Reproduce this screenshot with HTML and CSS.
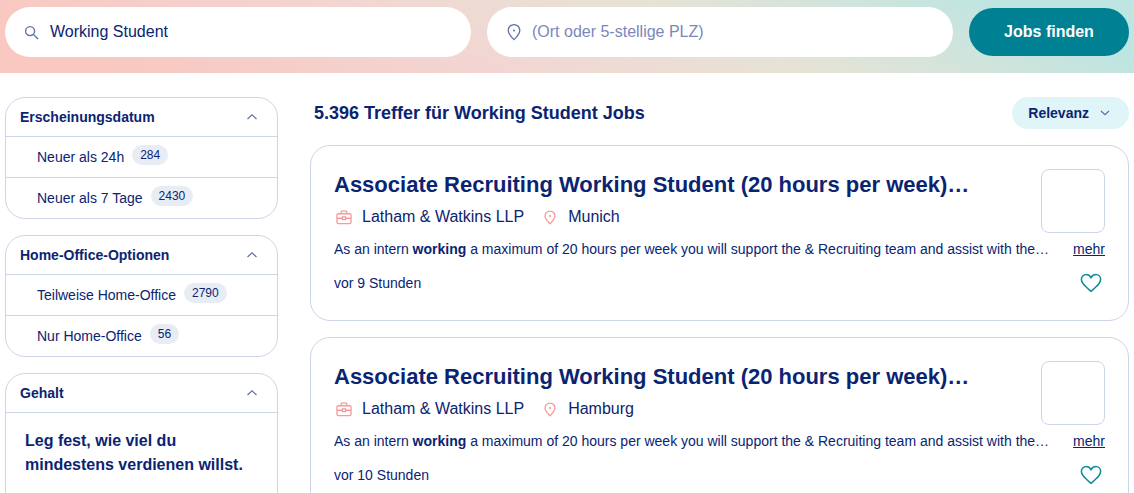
FILE: index.html
```html
<!DOCTYPE html>
<html lang="de">
<head>
  <meta charset="UTF-8">
  <title>Working Student Jobs</title>
  <link rel="stylesheet" href="styles.css">
</head>
<body>
  <header class="search-bar">
    <div class="search-field">
      <svg class="icon-search" width="15" height="15" viewBox="0 0 16 16" fill="none" stroke="#5f6fa8" stroke-width="1.500"><circle cx="6.500" cy="6.500" r="4.800"/><path d="M10 10l5 5"/></svg>
      <span class="field-value">Working Student</span>
    </div>
    <div class="search-field">
      <svg class="icon-place" width="16" height="18" viewBox="0 0 16 18" fill="none" stroke="#5f6fa8" stroke-width="1.300"><path d="M8 16.600C5 13.600 2.200 10.800 2.200 7.400a5.800 5.800 0 0 1 11.600 0c0 3.400-2.800 6.200-5.800 9.200z"/><circle cx="8" cy="7.400" r="1" fill="#5f6fa8" stroke="none"/></svg>
      <span class="field-placeholder">(Ort oder 5-stellige PLZ)</span>
    </div>
    <button class="search-button">Jobs finden</button>
  </header>

  <div class="page">
    <aside class="filters">
      <section class="filter">
        <div class="filter-head">
          <span>Erscheinungsdatum</span>
          <svg class="chevron" width="12" height="8" viewBox="0 0 12 8" fill="none" stroke="#5f6fa8" stroke-width="1.200"><path d="M1.500 6L6 1.800 10.500 6"/></svg>
        </div>
        <div class="filter-row"><span>Neuer als 24h</span><span class="count">284</span></div>
        <div class="filter-row"><span>Neuer als 7 Tage</span><span class="count">2430</span></div>
      </section>
      <section class="filter">
        <div class="filter-head">
          <span>Home-Office-Optionen</span>
          <svg class="chevron" width="12" height="8" viewBox="0 0 12 8" fill="none" stroke="#5f6fa8" stroke-width="1.200"><path d="M1.500 6L6 1.800 10.500 6"/></svg>
        </div>
        <div class="filter-row"><span>Teilweise Home-Office</span><span class="count">2790</span></div>
        <div class="filter-row"><span>Nur Home-Office</span><span class="count">56</span></div>
      </section>
      <section class="filter">
        <div class="filter-head">
          <span>Gehalt</span>
          <svg class="chevron" width="12" height="8" viewBox="0 0 12 8" fill="none" stroke="#5f6fa8" stroke-width="1.200"><path d="M1.500 6L6 1.800 10.500 6"/></svg>
        </div>
        <div class="salary">Leg fest, wie viel du mindestens verdienen willst.</div>
      </section>
    </aside>

    <main class="results">
      <div class="results-head">
        <h1 class="results-title">5.396 Treffer für Working Student Jobs</h1>
        <button class="sort-button">
          Relevanz
          <svg width="10" height="6" viewBox="0 0 10 6" fill="none" stroke="#5f6fa8" stroke-width="1.200"><path d="M1 1l4 3.600L9 1"/></svg>
        </button>
      </div>

      <article class="job">
        <div class="job-top">
          <div class="job-main">
            <h2 class="job-title">Associate Recruiting Working Student (20 hours per week)…</h2>
            <div class="job-meta">
              <svg class="icon-case" width="16" height="15" viewBox="0 0 18 16" fill="none" stroke="#f59a9a" stroke-width="1.500"><rect x="1.100" y="3.800" width="15.800" height="11" rx="1.500"/><path d="M5.800 3.800V1.700q0-.9.900-.9h4.600q.9 0 .9.900v2.100M1.100 8.800h15.800"/><rect x="7.300" y="7.300" width="3.400" height="3" fill="#fff"/></svg>
              <span class="company">Latham &amp; Watkins LLP</span>
              <svg class="icon-pin" width="12" height="15" viewBox="0 0 14 17" fill="none" stroke="#f59a9a" stroke-width="1.500"><path d="M7 15.800C4.200 13 1.200 10.300 1.200 6.800a5.800 5.800 0 0 1 11.600 0c0 3.500-3 6.200-5.800 9z"/><circle cx="7" cy="6.800" r="1.200" fill="#f58f8f" stroke="none"/></svg>
              <span>Munich</span>
            </div>
          </div>
          <div class="job-logo"></div>
        </div>
        <div class="job-desc">
          <p class="job-text">As an intern <b>working</b> a maximum of 20 hours per week you will support the &amp; Recruiting team and assist with the…</p>
          <a class="job-more" href="#">mehr</a>
        </div>
        <div class="job-foot">
          <span>vor 9 Stunden</span>
          <svg class="heart" width="22" height="20" viewBox="0 0 24 21" fill="none" stroke="#0f8b99" stroke-width="1.700"><path d="M12 19.500C6 14.500 1.500 11 1.500 6.600 1.500 3.500 3.900 1.300 6.700 1.300c2.200 0 4.100 1.200 5.300 3.300 1.200-2.100 3.100-3.300 5.300-3.300 2.800 0 5.200 2.200 5.200 5.300 0 4.400-4.500 7.900-10.500 12.900z"/></svg>
        </div>
      </article>

      <article class="job">
        <div class="job-top">
          <div class="job-main">
            <h2 class="job-title">Associate Recruiting Working Student (20 hours per week)…</h2>
            <div class="job-meta">
              <svg class="icon-case" width="16" height="15" viewBox="0 0 18 16" fill="none" stroke="#f59a9a" stroke-width="1.500"><rect x="1.100" y="3.800" width="15.800" height="11" rx="1.500"/><path d="M5.800 3.800V1.700q0-.9.900-.9h4.600q.9 0 .9.900v2.100M1.100 8.800h15.800"/><rect x="7.300" y="7.300" width="3.400" height="3" fill="#fff"/></svg>
              <span class="company">Latham &amp; Watkins LLP</span>
              <svg class="icon-pin" width="12" height="15" viewBox="0 0 14 17" fill="none" stroke="#f59a9a" stroke-width="1.500"><path d="M7 15.800C4.200 13 1.200 10.300 1.200 6.800a5.800 5.800 0 0 1 11.600 0c0 3.500-3 6.200-5.800 9z"/><circle cx="7" cy="6.800" r="1.200" fill="#f58f8f" stroke="none"/></svg>
              <span>Hamburg</span>
            </div>
          </div>
          <div class="job-logo"></div>
        </div>
        <div class="job-desc">
          <p class="job-text">As an intern <b>working</b> a maximum of 20 hours per week you will support the &amp; Recruiting team and assist with the…</p>
          <a class="job-more" href="#">mehr</a>
        </div>
        <div class="job-foot">
          <span>vor 10 Stunden</span>
          <svg class="heart" width="22" height="20" viewBox="0 0 24 21" fill="none" stroke="#0f8b99" stroke-width="1.700"><path d="M12 19.500C6 14.500 1.500 11 1.500 6.600 1.500 3.500 3.900 1.300 6.700 1.300c2.200 0 4.100 1.200 5.300 3.300 1.200-2.100 3.100-3.300 5.300-3.300 2.800 0 5.200 2.200 5.200 5.300 0 4.400-4.500 7.900-10.500 12.900z"/></svg>
        </div>
      </article>
    </main>
  </div>
</body>
</html>
```

FILE: styles.css
```css
* {
  box-sizing: border-box;
}
html, body {
  height: 493px;
  overflow: hidden;
}
body {
  margin: 0;
  background: #fff;
  color: #0a2472;
  font-family: "Liberation Sans", Arial, sans-serif;
}

/* suchleiste */
.search-bar {
  display: flex;
  align-items: center;
  gap: 16px;
  height: 73px;
  padding: 0 5px 9px;
  background: linear-gradient(24deg, #f8c8c1 10%, #f3d5d2 38%, #e6e3d6 63%, #bde5e1 90%);
}
.search-field {
  display: flex;
  align-items: center;
  width: 466px;
  height: 50px;
  padding-left: 19px;
  background: #fff;
  border-radius: 25px;
  font-size: 16px;
}
.icon-search {
  flex: none;
  margin-right: 11px;
}
.icon-place {
  flex: none;
  margin-right: 10px;
}
.field-placeholder {
  color: #7b87bb;
}
.search-button {
  width: 160px;
  height: 48px;
  background: #008193;
  color: #fff;
  border: none;
  border-radius: 24px;
  font: bold 16px "Liberation Sans", Arial, sans-serif;
}

.page {
  display: grid;
  grid-template-columns: 273px 819px;
  gap: 32px;
  padding: 24px 5px 0;
}

/* filter */
.filters {
  display: flex;
  flex-direction: column;
  gap: 16px;
}
.filter {
  border: 1px solid #cdd5e8;
  border-radius: 20px;
}
.filter-head {
  display: flex;
  align-items: center;
  justify-content: space-between;
  height: 39px;
  padding: 0 19px 1px 14px;
  border-bottom: 1px solid #cdd5e8;
  font-size: 14px;
  font-weight: bold;
}
.filter-row {
  display: flex;
  align-items: center;
  gap: 8px;
  height: 40px;
  padding-left: 31px;
  font-size: 14px;
}
.filter-row + .filter-row {
  height: 41px;
  border-top: 1px solid #cdd5e8;
}
.count {
  position: relative;
  top: -2px;
  padding: 3px 8px;
  background: #e8edf5;
  border-radius: 10px;
  font-size: 12px;
  line-height: 14px;
}
.salary {
  height: 140px;
  padding: 16px 19px;
  font-size: 16px;
  font-weight: bold;
  line-height: 24px;
}

/* ergebnisse */
.results-head {
  display: flex;
  align-items: center;
  justify-content: space-between;
  height: 32px;
  margin-bottom: 16px;
  padding-left: 4px;
}
.results-title {
  margin: 0;
  font-size: 18px;
}
.sort-button {
  display: flex;
  align-items: center;
  gap: 11px;
  height: 32px;
  padding: 0 19px 0 16px;
  background: #e0f5f7;
  color: #0a2472;
  border: none;
  border-radius: 16px;
  font: bold 14px "Liberation Sans", Arial, sans-serif;
}
.job {
  height: 176px;
  margin-bottom: 16px;
  padding: 23px 23px 0;
  border: 1px solid #cdd5e8;
  border-radius: 20px;
}
.job-top {
  display: flex;
  justify-content: space-between;
  height: 64px;
}
.job-title {
  margin: 1px 0 0;
  font-size: 22px;
  line-height: 30px;
}
.job-meta {
  display: flex;
  align-items: center;
  height: 24px;
  margin-top: 5px;
  font-size: 16px;
}
.icon-case {
  flex: none;
  margin: 0 10px 0 2px;
}
.icon-pin {
  flex: none;
  margin-right: 12px;
}
.company {
  margin-right: 20px;
}
.job-logo {
  width: 64px;
  height: 64px;
  border: 1px solid #cdd5e8;
  border-radius: 8px;
}
.job-desc {
  display: flex;
  justify-content: space-between;
  align-items: center;
  margin-top: 7px;
  font-size: 14px;
  line-height: 18px;
}
.job-text {
  margin: 0;
}
.job-more {
  color: #0a2472;
}
.job-foot {
  display: flex;
  justify-content: space-between;
  align-items: center;
  height: 24px;
  margin-top: 13px;
  font-size: 14px;
}
.heart {
  margin-right: 3px;
}
```
